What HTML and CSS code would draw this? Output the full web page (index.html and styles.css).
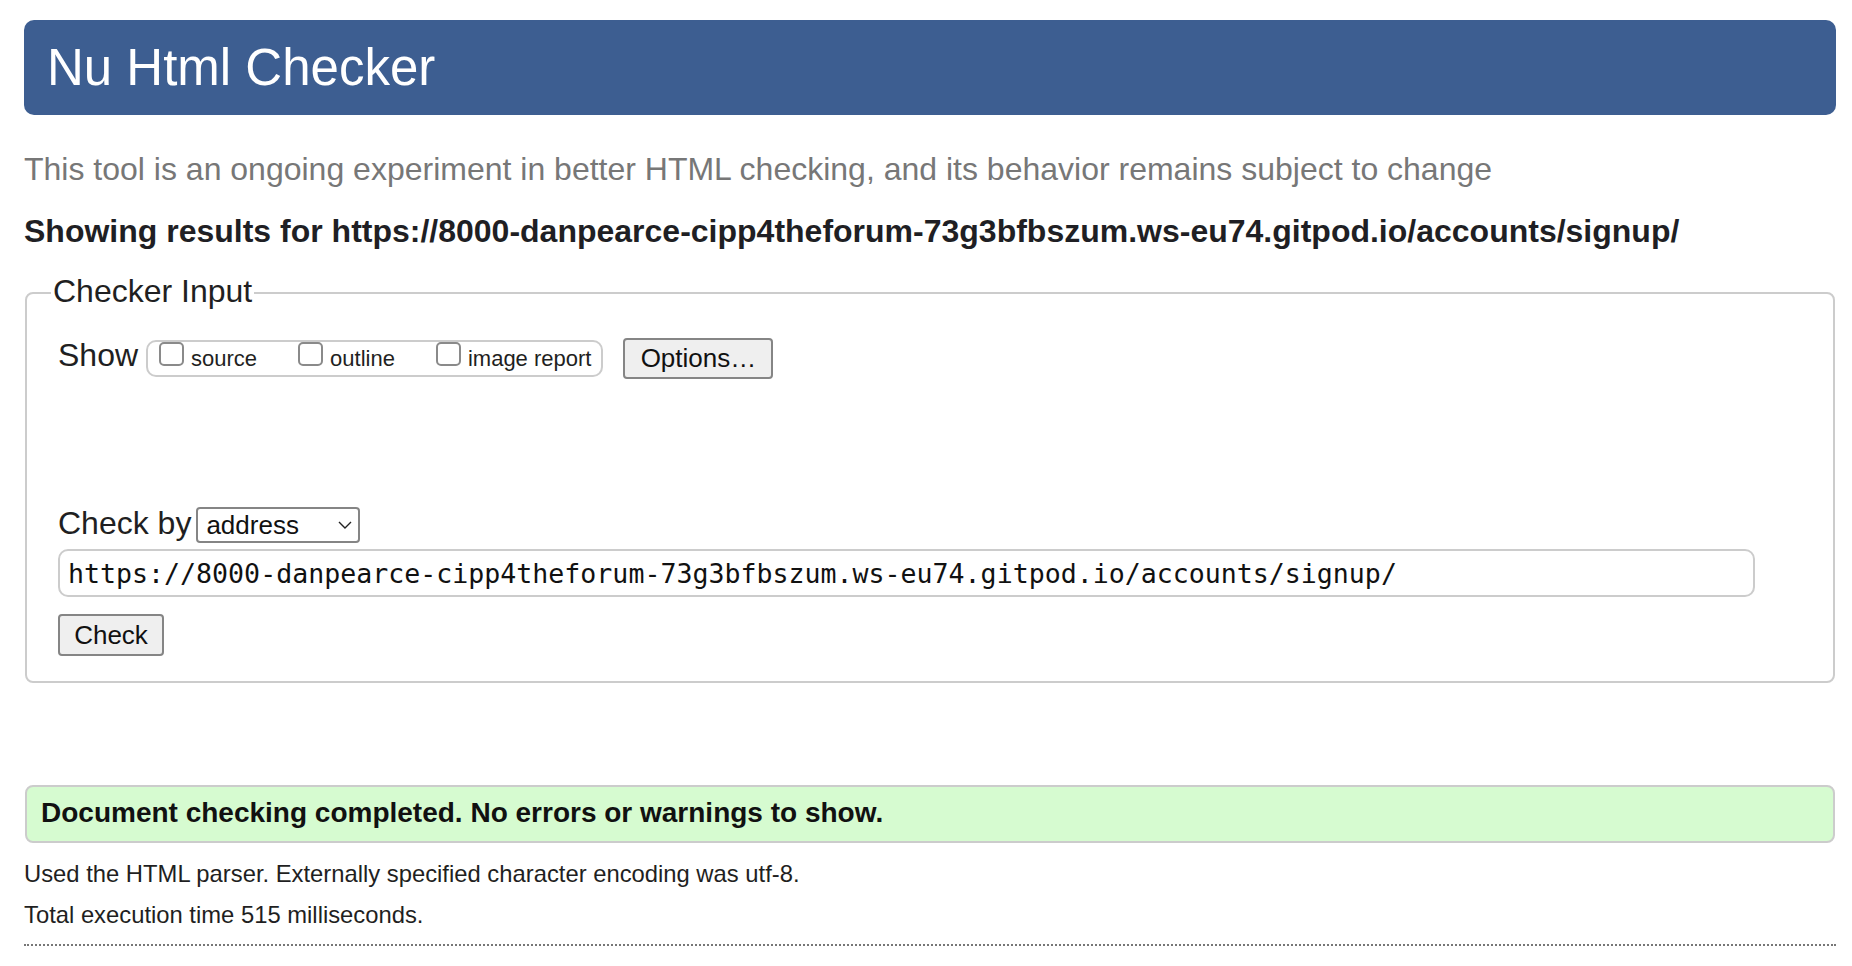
FILE: index.html
```html
<!DOCTYPE html>
<html lang="en">
<head>
<meta charset="utf-8">
<title>Nu Html Checker</title>
<link rel="stylesheet" href="styles.css">
</head>
<body>
<header class="banner"><h1 class="title">Nu Html Checker</h1></header>
<p class="intro">This tool is an ongoing experiment in better HTML checking, and its behavior remains subject to change</p>
<p class="results-for">Showing results for https://8000-danpearce-cipp4theforum-73g3bfbszum.ws-eu74.gitpod.io/accounts/signup/</p>
<form class="checker">
  <fieldset class="fs">
    <legend class="legend">Checker Input</legend>
    <div class="fs-body">
      <div class="show-row">
        <span class="show-label">Show</span>
        <div class="show-group">
          <label class="opt"><input class="cb" type="checkbox"><span class="opt-text">source</span></label>
          <label class="opt"><input class="cb" type="checkbox"><span class="opt-text">outline</span></label>
          <label class="opt"><input class="cb" type="checkbox"><span class="opt-text">image report</span></label>
        </div>
        <button type="button" class="btn btn-options">Options…</button>
      </div>
      <div class="checkby-row">
        <span class="checkby-label">Check by</span>
        <span class="select-wrap">
          <select class="select"><option>address</option></select>
          <svg class="chev" width="14" height="8" viewBox="0 0 14 8"><path d="M1 1 L7 7 L13 1" fill="none" stroke="#222" stroke-width="1.4"/></svg>
        </span>
      </div>
      <input class="url" type="text" value="https://8000-danpearce-cipp4theforum-73g3bfbszum.ws-eu74.gitpod.io/accounts/signup/">
      <button type="button" class="btn btn-check">Check</button>
    </div>
  </fieldset>
</form>
<div class="success">Document checking completed. No errors or warnings to show.</div>
<p class="meta meta-first">Used the HTML parser. Externally specified character encoding was utf-8.</p>
<p class="meta meta-second">Total execution time 515 milliseconds.</p>
<hr class="dotted">
</body>
</html>
```
FILE: styles.css
```css
html, body {
  background: #ffffff;
}
body {
  margin: 20px 16px 0 24px;
  font-family: "Liberation Sans", Arial, Helvetica, sans-serif;
  color: #1f1f22;
}
.banner {
  height: 95px;
  background: #3d5e91;
  border-radius: 10px;
  display: flex;
  align-items: center;
  padding-left: 23px;
}
.title {
  margin: 0;
  font-size: 51px;
  font-weight: normal;
  color: #ffffff;
  line-height: 58px;
}
.intro {
  margin: 36px 0 0 0;
  font-size: 32px;
  line-height: 36px;
  color: #777777;
}
.results-for {
  margin: 26px 0 0 0;
  font-size: 32px;
  line-height: 36px;
  font-weight: bold;
  color: #1f1f24;
}
.checker {
  margin: 0;
}
.fs {
  margin: 24px 1px 0 1px;
  padding: 0 0 0 24px;
  border: 2px solid #cccccc;
  border-radius: 8px;
  min-width: 0;
}
.legend {
  padding: 0 2px 4px 2px;
  font-size: 32px;
  line-height: 36px;
  color: #1f1f22;
}
.fs-body {
  padding: 25px 0 25px 7px;
}
.show-row {
  display: flex;
  align-items: flex-start;
  height: 41px;
}
.show-label {
  font-size: 32px;
  line-height: 36px;
  margin: -1px 8px 0 0;
}
.show-group {
  display: flex;
  align-items: flex-start;
  box-sizing: border-box;
  height: 37px;
  margin-top: 2px;
  padding: 0 10px 0 11px;
  border: 2px solid #cccccc;
  border-radius: 10px;
}
.opt {
  display: flex;
  align-items: flex-start;
  margin-right: 41px;
  font-size: 22px;
}
.opt:last-child {
  margin-right: 0;
}
.cb {
  appearance: none;
  -webkit-appearance: none;
  box-sizing: border-box;
  width: 25px;
  height: 24px;
  margin: 0 7px 0 0;
  border: 2px solid #8a8a8a;
  border-radius: 5px;
  background: #ffffff;
}
.opt-text {
  line-height: 26px;
  margin-top: 4px;
}
.btn {
  box-sizing: border-box;
  background: #efefef;
  border: 2px solid #858585;
  border-radius: 4px;
  font-family: "Liberation Sans", Arial, Helvetica, sans-serif;
  font-size: 26px;
  color: #111111;
  padding: 0;
  display: flex;
  align-items: center;
  justify-content: center;
}
.btn-options {
  width: 150px;
  height: 41px;
  margin-left: 20px;
}
.checkby-row {
  display: flex;
  align-items: flex-start;
  margin-top: 127px;
}
.checkby-label {
  font-size: 32px;
  line-height: 36px;
  margin: -1px 5px 0 0;
}
.select-wrap {
  position: relative;
  display: block;
  margin-top: 1px;
}
.select {
  appearance: none;
  -webkit-appearance: none;
  box-sizing: border-box;
  width: 164px;
  height: 36px;
  padding: 0 0 0 8px;
  border: 2px solid #858585;
  border-radius: 4px;
  background: #ffffff;
  font-family: "Liberation Sans", Arial, Helvetica, sans-serif;
  font-size: 26px;
  color: #111111;
}
.chev {
  position: absolute;
  right: 8px;
  top: 14px;
  pointer-events: none;
}
.url {
  display: block;
  box-sizing: border-box;
  width: 1697px;
  height: 48px;
  margin: 6px 0 0 0;
  padding: 0 0 0 8px;
  border: 2px solid #cccccc;
  border-radius: 10px;
  font-family: "DejaVu Sans Mono", "Liberation Mono", monospace;
  font-size: 26.6px;
  color: #111111;
  background: #ffffff;
  outline: none;
}
.btn-check {
  width: 106px;
  height: 42px;
  margin-top: 17px;
}
.success {
  box-sizing: border-box;
  height: 58px;
  margin: 102px 1px 0 1px;
  padding: 10px 0 0 14px;
  border: 2px solid #cccccc;
  border-radius: 8px;
  background: #d6fbd0;
  font-size: 28px;
  line-height: 32px;
  font-weight: bold;
  color: #111111;
}
.meta {
  font-size: 23.8px;
  line-height: 27px;
  color: #1f1f22;
}
.meta-first {
  margin: 17px 0 0 0;
}
.meta-second {
  margin: 14px 0 0 0;
}
.dotted {
  margin: 16px 0 0 0;
  height: 0;
  border: 0;
  border-top: 2px dotted #777777;
}
```
